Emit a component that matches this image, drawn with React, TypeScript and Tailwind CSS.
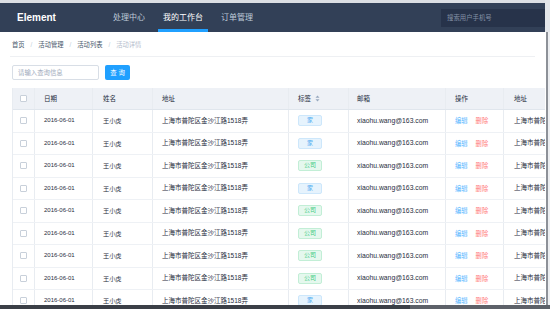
import React from "react";

const FONT = { fontFamily: '"Liberation Sans", "Noto Sans CJK SC", sans-serif' };

const rows = ["家", "家", "公司", "家", "公司", "公司", "公司", "公司", "家"];

function Check() {
  return <div className="w-[7px] h-[7px] rounded-[1px] border border-[#c8d0da] bg-white" />;
}

function SortIcon() {
  return (
    <svg width="5" height="7" viewBox="0 0 5 7" className="ml-[4px]">
      <path d="M2.5 0.5 L4.5 2.8 L0.5 2.8 Z" fill="#97a8be" />
      <path d="M2.5 6.5 L4.5 4.2 L0.5 4.2 Z" fill="#97a8be" />
    </svg>
  );
}

function Tag({ t }: { t: string }) {
  const home = t === "家";
  return (
    <div
      className={
        "w-[24px] h-[11px] rounded-[2px] border flex items-center justify-center text-[6px] " +
        (home
          ? "bg-[#e6f3fd] border-[#cde7fb] text-[#4aa8f0]"
          : "bg-[#e5f8ee] border-[#c2eed6] text-[#3ccb7f]")
      }
    >
      {t}
    </div>
  );
}

export default function App() {
  const cell = "flex items-center shrink-0 border-r border-[#e8ecf1] h-full";
  return (
    <div className="w-[550px] h-[309px] overflow-hidden flex flex-col bg-white" style={FONT}>
      <div className="flex flex-1 min-h-0">
        <div className="w-[545px] flex flex-col min-h-0">
          <div className="h-[3px] bg-[#dcdfe4]" />
          <div className="h-[29px] bg-[#324057] flex items-center">
            <div className="ml-[17px] text-white font-bold text-[10px] w-[91px]">Element</div>
            <div className="flex items-stretch h-full gap-[8px]">
              <div className="px-[5px] flex items-center text-[8px] text-[#bfcbd9]">处理中心</div>
              <div className="px-[5px] flex items-center text-[8px] text-white border-b-[3px] border-[#20a0ff] pt-[3px]">我的工作台</div>
              <div className="px-[5px] flex items-center text-[8px] text-[#bfcbd9]">订单管理</div>
            </div>
            <div className="ml-auto w-[104px] h-[18px] bg-[#27334a] flex items-center pl-[6px] text-[6.4px] text-[#8391a5]">
              搜索用户手机号
            </div>
          </div>
          <div className="mx-[10px] h-[25px] border-b border-[#eef0f3] flex items-center pl-[2px] pt-[1px] text-[6.3px] text-[#48576a]">
            <span>首页</span>
            <span className="mx-[6px] text-[#c0ccda]">/</span>
            <span>活动管理</span>
            <span className="mx-[6px] text-[#c0ccda]">/</span>
            <span>活动列表</span>
            <span className="mx-[6px] text-[#c0ccda]">/</span>
            <span className="text-[#b4bccc]">活动详情</span>
          </div>
          <div className="flex items-center ml-[12px] mt-[8px] gap-[6px]">
            <div className="w-[87px] h-[15px] border border-[#d8dee6] rounded-[2px] flex items-center pl-[5px] text-[6.4px] text-[#a0aabb]">
              请输入查询信息
            </div>
            <div className="w-[25px] h-[15px] rounded-[2px] bg-[#20a0ff] text-white text-[6.4px] flex items-center justify-center">
              查 询
            </div>
          </div>
          <div className="ml-[12px] mt-[8px] flex-1 min-h-0 overflow-hidden border-l border-[#e8ecf1] text-[6.5px]">
            <div className="w-[700px]">
              <div className="h-[22px] bg-[#eef1f6] flex items-center text-[#1f2d3d] border-b border-[#e0e6ed]">
                <div className={cell + " w-[22px] justify-center"}><Check /></div>
                <div className={cell + " w-[58px] pl-[9px]"}>日期</div>
                <div className={cell + " w-[60px] pl-[10px]"}>姓名</div>
                <div className={cell + " w-[136px] pl-[9px]"}>地址</div>
                <div className={cell + " w-[60px] pl-[9px]"}>标签<SortIcon /></div>
                <div className={cell + " w-[97px] pl-[8px]"}>邮箱</div>
                <div className={cell + " w-[58px] pl-[9px]"}>操作</div>
                <div className={cell + " w-[136px] pl-[10px]"}>地址</div>
              </div>
              {rows.map((t, i) => (
                <div key={i} className="h-[22.5px] flex items-center text-[#1f2d3d] border-b border-[#eef1f5]">
                  <div className={cell + " w-[22px] justify-center"}><Check /></div>
                  <div className={cell + " w-[58px] pl-[9px] text-[6px]"}>2016-06-01</div>
                  <div className={cell + " w-[60px] pl-[10px] text-[6.2px]"}>王小虎</div>
                  <div className={cell + " w-[136px] pl-[9px]"}>上海市普陀区金沙江路1518弄</div>
                  <div className={cell + " w-[60px] pl-[9px]"}><Tag t={t} /></div>
                  <div className={cell + " w-[97px] pl-[8px] text-[6.8px]"}>xiaohu.wang@163.com</div>
                  <div className={cell + " w-[58px] pl-[9px] gap-[8px] text-[6.3px]"}>
                    <span className="text-[#58b7ff]">编辑</span>
                    <span className="text-[#ff7a7a]">删除</span>
                  </div>
                  <div className={cell + " w-[136px] pl-[10px]"}>上海市普陀区金沙江路1518弄</div>
                </div>
              ))}
            </div>
          </div>
        </div>
        <div className="w-[5px] flex flex-col">
          <div className="h-[32px] bg-[#e3e6ea]" />
          <div className="flex-1 flex">
            <div className="w-[1px] bg-white" />
            <div className="w-[2px] bg-[#8d9198]" />
            <div className="flex-1 bg-[#eceef1]" />
          </div>
        </div>
      </div>
      <div className="h-[4px] flex">
        <div className="w-[410px] bg-[#3b3f47]" />
        <div className="flex-1 bg-[#5d6169]" />
      </div>
    </div>
  );
}
